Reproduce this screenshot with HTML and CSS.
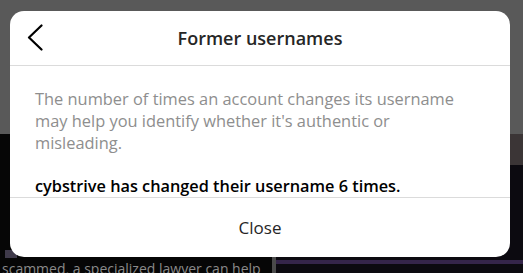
FILE: index.html
```html
<!DOCTYPE html>
<html lang="en">
<head>
    <meta charset="UTF-8">
    <meta name="viewport" content="width=device-width, initial-scale=1.0">
    <title>Former usernames</title>
    <link rel="stylesheet" href="styles.css">
</head>
<body>
    <!-- dimmed page behind the dialog -->
    <div class="page">
        <div class="page-top"></div>
        <div class="feed">
            <div class="feed-left">
                <span class="avatar"></span>
                <p class="caption">scammed, a specialized lawyer can help</p>
            </div>
            <div class="feed-sep"></div>
            <div class="feed-right">
                <div class="story"></div>
                <div class="band"></div>
            </div>
        </div>
    </div>

    <div class="dialog">
        <div class="dialog-header">
            <button type="button" class="back" aria-label="Back">
                <svg width="16" height="27" viewBox="0 0 16 27">
                    <polyline points="14.5,1.5 2,13.5 14.5,25.5" fill="none" stroke="#000" stroke-width="2.2" stroke-linecap="round" stroke-linejoin="round"/>
                </svg>
            </button>
            <h1>Former usernames</h1>
        </div>

        <div class="dialog-body">
            <p class="note">The number of times an account changes its username may help you identify whether it's authentic or misleading.</p>
            <p class="count">cybstrive has changed their username 6 times.</p>
        </div>

        <button type="button" class="close">Close</button>
    </div>
</body>
</html>
```

FILE: styles.css
```css
body {
    margin: 0;
    padding: 0;
    font-family: 'Open Sans', 'Noto Sans', sans-serif;
    background-color: #060606;
    overflow: hidden;
}
.page {
    width: 523px;
    height: 273px;
}
.page-top {
    height: 134px;
    background-color: #595959;
}
.feed {
    display: grid;
    grid-template-columns: 272px 4px 1fr;
    height: 139px;
}
.feed-left {
    display: flex;
    flex-direction: column;
    justify-content: flex-end;
    background-color: #060606;
    overflow: hidden;
}
.avatar {
    width: 12px;
    height: 8px;
    margin: 0 0 2px 5px;
    background-color: #3f3a4a;
}
.caption {
    margin: 0 0 -5px 2px;
    font-size: 14px;
    line-height: 18px;
    color: #8a8a8a;
    white-space: nowrap;
}
.feed-sep {
    background-color: #4a4a4a;
}
.feed-right {
    display: flex;
    flex-direction: column;
    justify-content: space-between;
    background-color: #0c0a10;
}
.story {
    height: 31px;
    background-color: #3b3536;
}
.band {
    height: 4px;
    margin-bottom: 9px;
    background-color: #35254a;
}
/* dialog */
.dialog {
    position: absolute;
    top: 11px;
    left: 10px;
    width: 500px;
    height: 246px;
    background-color: #fff;
    border-radius: 14px;
    display: flex;
    flex-direction: column;
    overflow: hidden;
}
.dialog-header {
    display: flex;
    align-items: center;
    justify-content: center;
    height: 54px;
    flex-shrink: 0;
    border-bottom: 1px solid #dbdbdb;
    position: relative;
}
.back {
    position: absolute;
    left: 17px;
    top: 13px;
    padding: 0;
    border: none;
    background: none;
    display: flex;
}
.dialog-header h1 {
    margin: 0;
    font-size: 18px;
    font-weight: 600;
    color: #262626;
}
.dialog-body {
    box-sizing: border-box;
    flex-shrink: 0;
    padding: 22px 40px 0 25px;
    height: 132px;
    border-bottom: 1px solid #dbdbdb;
}
.dialog-body p {
    margin: 0;
    line-height: 22px;
}
.note {
    font-size: 16.4px;
    color: #8e8e8e;
}
.count {
    margin-top: 21px !important;
    font-size: 16.3px;
    color: #000;
    font-weight: 600;
}
.close {
    flex: 1;
    border: none;
    background: none;
    font-family: inherit;
    font-size: 17px;
    color: #262626;
    padding: 0;
}
```
